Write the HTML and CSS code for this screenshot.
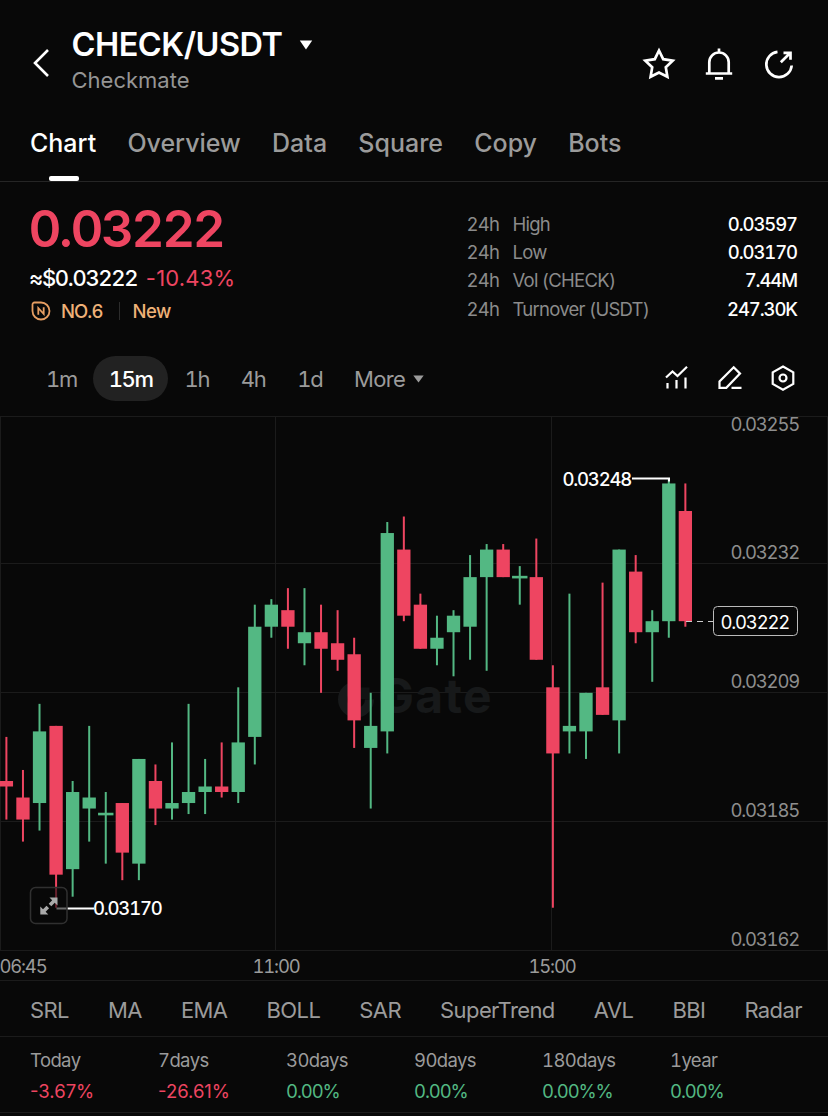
FILE: index.html
```html
<!DOCTYPE html>
<html lang="en">
<head>
  <meta charset="UTF-8">
  <title>CHECK/USDT</title>
  <link rel="stylesheet" href="styles.css">
</head>
<body>
  <header class="topbar">
    <svg class="back" width="20" height="32" viewBox="0 0 20 32"><path d="M17 3 4 16l13 13"/></svg>
    <div class="pair">
      <h1>CHECK/USDT <svg width="14" height="10" viewBox="0 0 14 10"><path d="M.8.5h12.4L7 9.5z"/></svg></h1>
      <p>Checkmate</p>
    </div>
    <div class="actions">
      <svg width="34" height="34" viewBox="0 0 34 34"><path d="m17 3.500 4.200 8.700 9.500 1.400-6.900 6.700 1.600 9.500L17 25.500l-8.400 4.300 1.600-9.500-6.900-6.700 9.500-1.400z"/></svg>
      <svg width="34" height="34" viewBox="0 0 34 34"><path d="M17 1.500v4M7.300 26.500V15.200a9.700 9.700 0 0 1 19.400 0v11.300M3.800 26.500h26.400M13 31.300h8"/></svg>
      <svg width="34" height="34" viewBox="0 0 34 34"><path d="M15.500 4.800A12.700 12.700 0 1 0 29.700 18.500M18.800 15.300l9.500-9.500M21.500 5.800h7v7"/></svg>
    </div>
  </header>

  <nav class="tabs">
    <a class="active">Chart</a>
    <a>Overview</a>
    <a>Data</a>
    <a>Square</a>
    <a>Copy</a>
    <a>Bots</a>
  </nav>

  <section class="ticker">
    <div>
      <div class="price">0.03222</div>
      <div class="fiat">≈$0.03222 <span class="down">-10.43%</span></div>
      <div class="tags">
        <svg width="20" height="20" viewBox="0 0 20 20"><path d="M3.500 1.500H10a8.500 8.500 0 0 1 0 17A8.500 8.500 0 0 1 1.500 10V3.500a2 2 0 0 1 2-2z"/><path d="M7.300 13.700V7l5.400 6V6.300"/></svg>
        <span>NO.6</span>
        <span class="new">New</span>
      </div>
    </div>
    <dl class="stats">
      <dt>24h</dt><dt>High</dt><dd>0.03597</dd>
      <dt>24h</dt><dt>Low</dt><dd>0.03170</dd>
      <dt>24h</dt><dt>Vol (CHECK)</dt><dd>7.44M</dd>
      <dt>24h</dt><dt>Turnover (USDT)</dt><dd>247.30K</dd>
    </dl>
  </section>

  <div class="toolbar">
    <div class="intervals">
      <a>1m</a>
      <a class="active">15m</a>
      <a>1h</a>
      <a>4h</a>
      <a>1d</a>
      <a class="more">More <svg width="11" height="8" viewBox="0 0 11 8"><path d="M.3.500h10.400L5.500 7.500z"/></svg></a>
    </div>
    <div class="tools">
      <svg width="26" height="26" viewBox="0 0 26 26"><path d="m2 12.500 6.500-6 5 4.500L23 1.800M3.500 18v5.500M12.500 15v8.500M21.500 12.500v11"/></svg>
      <svg width="26" height="26" viewBox="0 0 26 26"><path d="m16.700 2.300 6.300 6.300L9.300 22.800H2.500v-6.300zM14.500 22.800h10"/></svg>
      <svg width="26" height="26" viewBox="0 0 26 26"><path d="m13 1.500 10.300 5.900v11.500L13 24.700 2.700 18.900V7.400z"/><circle cx="13" cy="13" r="3.500"/></svg>
    </div>
  </div>

  <svg id="chart" width="828" height="565" viewBox="0 0 828 565">
    <path class="grid" d="M0 .5h828M0 147.500h828M0 276.500h828M0 405.500h828M0 534.500h828M.5 0v534M275.500 0v534M551.500 0v534M827.500 0v534M0 564.500h828"/>
    <g class="watermark">
      <path d="M356 270a13.500 13.500 0 1 0 13.500 13.500"/>
      <path class="dot" d="M358 271.500h11.500v11.500H358z"/>
      <text x="378" y="297">Gate</text>
    </g>
    <g id="candles"></g>
    <g class="axis">
      <text x="799" y="14.500">0.03255</text>
      <text x="799" y="143">0.03232</text>
      <text x="799" y="272">0.03209</text>
      <text x="799" y="401">0.03185</text>
      <text x="799" y="530">0.03162</text>
    </g>
    <g class="time">
      <text x="-0.500" y="557" class="first">06:45</text>
      <text x="276" y="557">11:00</text>
      <text x="552" y="557">15:00</text>
    </g>
    <path class="lead" d="M632 62.500h37v3M56.500 492.500H94"/>
    <text class="mark" x="562.500" y="69.500">0.03248</text>
    <text class="mark" x="93" y="499">0.03170</text>
    <path class="dash" d="M686 205.500h28"/>
    <rect class="last" x="713.500" y="190.500" width="84" height="29" rx="4"/>
    <text class="mark now" x="720.500" y="212.500">0.03222</text>
    <rect class="expand" x="30.500" y="471.500" width="36.500" height="36" rx="5"/>
    <path class="arrows" d="M49.500 481.500h8v8l-2.700-2.700-3.500 3.500-2.600-2.600 3.500-3.500zM48.300 498.500h-8v-8l2.700 2.700 3.500-3.500 2.600 2.600-3.500 3.500z"/>
  </svg>

  <nav class="indicators">
    <a>SRL</a><a>MA</a><a>EMA</a><a>BOLL</a><a>SAR</a><a>SuperTrend</a><a>AVL</a><a>BBI</a><a>Radar</a>
  </nav>

  <section class="returns">
    <div>Today<b class="down">-3.67%</b></div>
    <div>7days<b class="down">-26.61%</b></div>
    <div>30days<b>0.00%</b></div>
    <div>90days<b>0.00%</b></div>
    <div>180days<b>0.00%%</b></div>
    <div>1year<b>0.00%</b></div>
  </section>

  <script>
    // open, high, low, close in units of 0.00001
    const data = [
      [3193,3201,3186,3192],[3190,3195,3182,3186],[3189,3207,3184,3202],[3203,3203,3170,3176],
      [3177,3193,3172,3191],[3188,3203,3182,3190],[3187,3191,3178,3187],[3189,3189,3175,3180],
      [3178,3197,3175,3197],[3193,3196,3185,3188],[3188,3200,3186,3189],[3189,3207,3187,3191],
      [3191,3197,3187,3192],[3192,3200,3190,3191],[3191,3210,3189,3200],[3201,3225,3196,3221],
      [3221,3226,3219,3225],[3224,3228,3217,3221],[3218,3228,3214,3220],[3220,3225,3209,3217],
      [3218,3224,3213,3215],[3216,3219,3199,3204],[3199,3209,3188,3203],[3202,3240,3198,3238],
      [3235,3241,3222,3223],[3225,3227,3217,3217],[3217,3223,3214,3219],[3220,3224,3212,3223],
      [3221,3234,3215,3230],[3230,3236,3213,3235],[3235,3236,3230,3230],[3230,3232,3225,3230],
      [3230,3237,3215,3215],[3210,3214,3170,3198],[3202,3227,3198,3203],[3202,3209,3197,3209],
      [3210,3229,3205,3205],[3204,3235,3198,3235],[3231,3234,3218,3220],[3220,3224,3211,3222],
      [3222,3248,3219,3247],[3242,3247,3221,3222]
    ];
    const step = 16.56;
    const y = p => 205.2 + (3222 - p) * 5.51;
    let out = '';
    data.forEach(([o, h, l, c], i) => {
      const x = 6.4 + i * step;
      const cls = c >= o ? 'up' : 'dn';
      const top = y(Math.max(o, c));
      const bottom = y(Math.min(o, c));
      out += `<rect class="${cls}" x="${x - 1}" y="${y(h)}" width="2" height="${y(l) - y(h)}"/>`;
      if (o === c) {
        out += `<rect class="${cls}" x="${x - 7.7}" y="${top - 1.3}" width="15.4" height="2.6"/>`;
      } else {
        out += `<rect class="${cls}" x="${x - 6.65}" y="${top}" width="13.3" height="${bottom - top}"/>`;
      }
    });
    document.getElementById('candles').innerHTML = out;
  </script>
</body>
</html>
```

FILE: styles.css
```css
* { box-sizing:border-box; }
body { margin:0; width:828px; height:1116px; overflow:hidden; background:#080808; color:#fff; font-family:Inter, "Liberation Sans", sans-serif; font-variant-numeric:tabular-nums; }
svg { display:block; fill:none; }
h1, p, dl, dt, dd { margin:0; }
.down { color:#ee4561; font-variant-numeric:normal; }

.topbar { display:flex; height:112px; padding:25px 32px 0 31px; }
.back { margin-top:22px; stroke:#fff; stroke-width:2.6; }
.pair { flex:1; margin-left:20.5px; }
.pair h1 { display:flex; align-items:center; gap:17px; font-size:32.5px; line-height:40px; font-weight:600; letter-spacing:-0.5px; }
.pair h1 svg { fill:#fff; }
.pair p { font-size:22px; line-height:30px; color:#959595; }
.actions { display:flex; gap:26px; margin-top:22px; }
.actions svg { stroke:#fff; stroke-width:2.7; }

.tabs { display:flex; gap:31.2px; height:70px; padding:0 30px; border-bottom:1px solid #252525; font-size:25px; line-height:62px; font-weight:500; color:#9b9b9b; }
.tabs .active { position:relative; color:#fff; }
.tabs .active::after { content:""; position:absolute; left:50%; bottom:0; width:30px; height:5px; margin-left:-14px; border-radius:2px; background:#fff; }

.ticker { display:flex; justify-content:space-between; height:174px; padding:20px 30px 0; }
.price { margin-left:-1.5px; font-size:51px; line-height:54px; font-weight:600; letter-spacing:-2.4px; color:#ee4561; }
.fiat { margin:8px 0 0 -1px; font-size:22px; line-height:28px; font-weight:500; letter-spacing:-1.3px; }
.fiat .down { margin-left:4px; font-weight:400; letter-spacing:0.2px; }
.tags { display:flex; align-items:center; margin-top:6px; font-size:18.5px; line-height:26px; font-weight:500; letter-spacing:-0.9px; color:#efb177; }
.tags svg { margin:0 10px 0 1px; stroke:#e79e62; stroke-width:1.8; }
.tags .new { margin-left:16px; padding-left:14px; letter-spacing:-0.5px; background:linear-gradient(#2c2c2c, #2c2c2c) 0 50% / 1px 18px no-repeat; }
.stats { display:grid; grid-template-columns:46px 170px 115px; grid-auto-rows:28.2px; margin-top:8px; font-size:18.5px; line-height:28px; letter-spacing:-0.75px; }
.stats dt { margin-left:-0.5px; color:#8b8b8b; white-space:nowrap; }
.stats dd { text-align:right; font-weight:500; letter-spacing:-1.1px; margin-right:1px; }

.toolbar { display:flex; justify-content:space-between; height:60px; padding:0 32px 0 30px; }
.intervals { display:flex; font-size:22px; line-height:46px; letter-spacing:-1.3px; color:#9b9b9b; }
.intervals a { display:flex; align-items:center; gap:8px; height:45px; padding:0 15.7px 0 16px; }
.intervals svg { fill:#9b9b9b; }
.intervals .active { border-radius:23px; background:#222; color:#fff; font-weight:500; }
.intervals .more { letter-spacing:-0.7px; }
.tools { display:flex; gap:27px; margin-top:9px; }
.tools svg { stroke:#fff; stroke-width:2.2; }

#chart { overflow:visible; font-size:18.5px; letter-spacing:-1.2px; }
.grid { stroke:#1b1b1b; }
.up { fill:#53b883; }
.dn { fill:#ee4561; }
.watermark { fill:#17191a; }
.watermark path { fill:none; stroke:#17191a; stroke-width:9; }
.watermark .dot { fill:#111313; stroke:none; }
.watermark text { font-size:48px; font-weight:700; letter-spacing:1.3px; }
.axis { fill:#8e8e8e; text-anchor:end; }
.time { fill:#9b9b9b; text-anchor:middle; }
.time .first { text-anchor:start; }
.mark { fill:#fff; font-weight:500; }
.mark.now { font-weight:400; }
.lead { stroke:#fff; stroke-width:2; }
.dash { stroke:#ccc; stroke-width:1.2; stroke-dasharray:6 5; }
.last { fill:#080808; stroke:#bbb; }
.expand { fill:#08080899; stroke:#303030; stroke-width:1.5; }
.arrows { fill:#aaa; }

.indicators { display:flex; justify-content:space-between; height:56px; padding:0 26px 0 30px; border-bottom:1px solid #1b1b1b; font-size:22px; line-height:58px; letter-spacing:-0.6px; color:#9b9b9b; }
.returns { display:grid; grid-template-columns:repeat(6, 128px); height:76px; padding:8px 0 0 30px; border-bottom:1px solid #1b1b1b; font-size:18.5px; line-height:31px; letter-spacing:-0.6px; color:#9b9b9b; }
.returns b { display:block; font-weight:400; letter-spacing:-1.1px; color:#53b883; }
.returns .down { color:#ee4561; letter-spacing:0; }
```
